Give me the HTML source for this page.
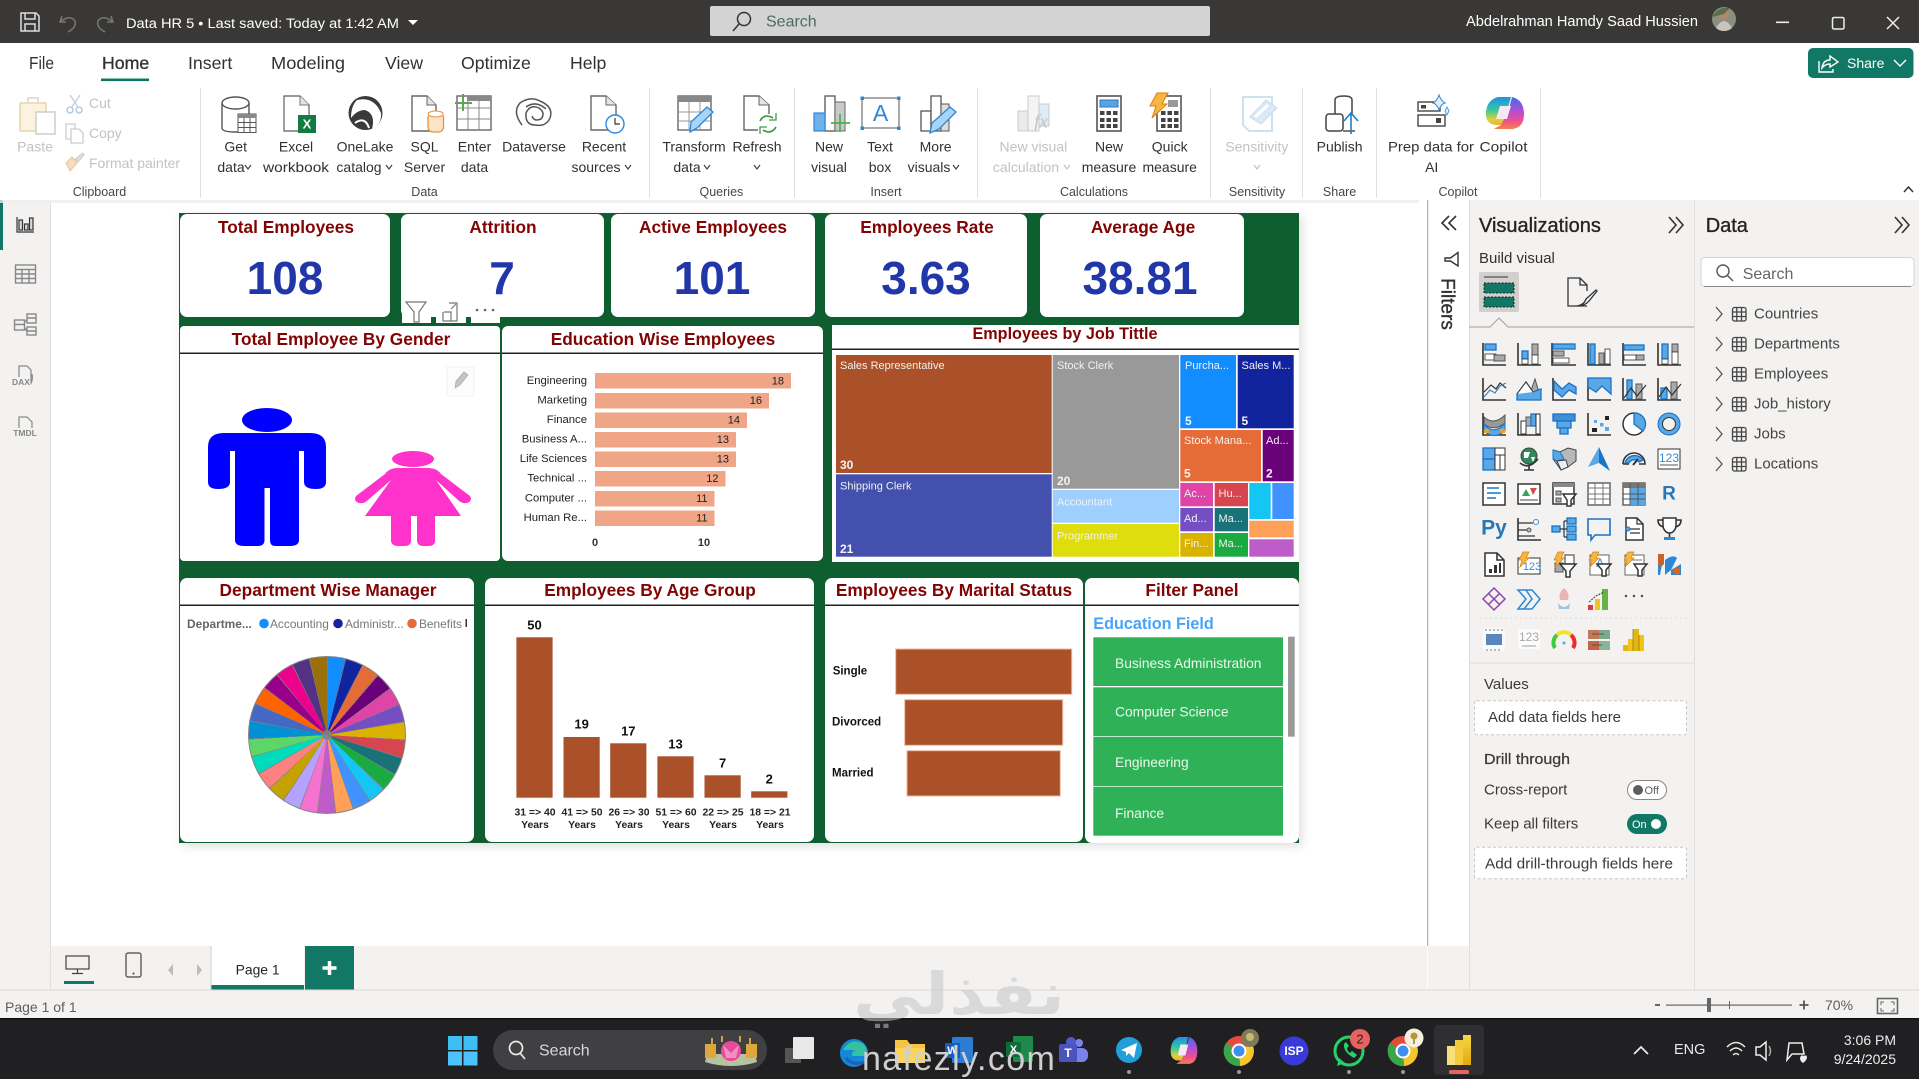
<!DOCTYPE html>
<html><head><meta charset="utf-8"><title>Power BI</title>
<style>
html,body{margin:0;padding:0;width:1919px;height:1079px;overflow:hidden;background:#fff}
svg{position:absolute;left:0;top:0;display:block}
text{font-family:"Liberation Sans","DejaVu Sans",sans-serif;dominant-baseline:central}
.m{text-anchor:middle}.e{text-anchor:end}
.tab{font-size:17.7px;fill:#323130}
.r{font-size:14px;fill:#323130;text-anchor:middle}
.rd{font-size:14px;fill:#c4c2c0;text-anchor:middle}
.gl{font-size:12.5px;fill:#484644;text-anchor:middle}
.h{font-size:17.3px;font-weight:bold;fill:#800404;text-anchor:middle}
.v{font-size:46px;font-weight:bold;fill:#2136a8;text-anchor:middle}
.el{font-size:11.3px;fill:#222;text-anchor:end}
.ev{font-size:11px;fill:#222;text-anchor:end}
.tm{font-size:11px;fill:#f1f1f1}
.tv{font-size:12px;font-weight:bold;fill:#f4f4f4}
.ag{font-size:13px;font-weight:bold;fill:#111;text-anchor:middle}
.ax{font-size:10.4px;font-weight:bold;fill:#222;text-anchor:middle}
.fl{font-size:13.8px;fill:#e9f7ec}
.p{font-size:15px;fill:#3b3a39}
.tr{font-size:15px;fill:#444}
.s{fill:none;stroke:#333;stroke-width:1.6}
.b{fill:#5aa7e6;stroke:#1a73c4;stroke-width:1.3}
.g{fill:#aaa;stroke:#555;stroke-width:1}
.w{fill:#fff;stroke:#333;stroke-width:1.5}
.d{fill:#333}
#pie{position:absolute;left:248px;top:656px;width:158px;height:158px;border-radius:50%;box-sizing:border-box;border:1px solid #888;background:conic-gradient(#118dff 0 13.33deg,#12239e 0 26.67deg,#e66c37 0 40deg,#6b007b 0 53.33deg,#e044a7 0 66.67deg,#744ec2 0 80deg,#d9b300 0 93.33deg,#d64550 0 106.67deg,#197278 0 120deg,#1aab40 0 133.33deg,#15c6f4 0 146.67deg,#4092ff 0 160deg,#ffa058 0 173.33deg,#be5dc9 0 186.67deg,#f472d0 0 200deg,#b5a1ff 0 213.33deg,#c4a200 0 226.67deg,#ff8080 0 240deg,#00dbbc 0 253.33deg,#5bd667 0 266.67deg,#0091d5 0 280deg,#4668c5 0 293.33deg,#ff6300 0 306.67deg,#99008a 0 320deg,#ec008c 0 333.33deg,#533285 0 346.67deg,#99700a 0 360deg)}
#pie2{position:absolute;left:248px;top:656px;width:158px;height:158px;border-radius:50%;background:radial-gradient(circle,rgba(130,130,130,.85) 0 4px,transparent 6px),repeating-conic-gradient(rgba(130,130,130,.85) 0 .8deg,transparent .8deg 13.333deg)}
</style></head><body>
<svg width="1919" height="1079" viewBox="0 0 1919 1079" xmlns="http://www.w3.org/2000/svg">
<defs>
<linearGradient id="cl" x1="0" y1="0" x2="0" y2="1"><stop offset="0" stop-color="#1f8fe8"/><stop offset=".45" stop-color="#35c6a0"/><stop offset=".8" stop-color="#d7d23a"/><stop offset="1" stop-color="#f8b030"/></linearGradient>
<linearGradient id="cr" x1="0" y1="0" x2="0" y2="1"><stop offset="0" stop-color="#3f6fe8"/><stop offset=".4" stop-color="#a94fd8"/><stop offset=".75" stop-color="#ef4f8f"/><stop offset="1" stop-color="#f77f4a"/></linearGradient>
<linearGradient id="pb" x1="0" y1="0" x2="0" y2="1"><stop offset="0" stop-color="#f7d64a"/><stop offset="1" stop-color="#e0a80e"/></linearGradient>
<g id="cop"><path d="M1498 97H1511L1503 125H1496Q1485 124 1486 112Q1487 100 1498 97Z" fill="url(#cl)"/><path d="M1512 97Q1524 100 1524 114Q1524 127 1513 129H1494L1501 125L1508 112L1512 97Z" fill="url(#cr)"/><path d="M1500 106H1511L1507 119H1496Z" fill="#f5e9f5"/></g>
</defs>
<!-- backgrounds -->
<rect width="1919" height="1079" fill="#fff"/>
<rect x="0" y="200" width="50" height="790" fill="#f3f2f1"/>
<rect x="50" y="200" width="1" height="790" fill="#e1dfdd"/>
<rect x="0" y="200" width="3" height="50" fill="#117865"/>
<rect x="1469" y="200" width="450" height="790" fill="#f3f2f1"/>
<rect x="1469" y="200" width="1" height="790" fill="#e1dfdd"/>
<rect x="1694" y="200" width="1" height="790" fill="#e1dfdd"/>
<rect x="1427" y="200" width="1.2" height="746" fill="#b0b0b0"/>
<!-- title bar -->
<rect width="1919" height="43" fill="#393836"/>
<g fill="none" stroke="#ddd" stroke-width="1.5"><path d="M21 13H36L39 16V31H21Z"/><path d="M25 13V19H35V13M25 31V24H35V31"/></g>
<g fill="none" stroke="#777" stroke-width="1.5"><path d="M62 16L60 22L66 22M60 22Q70 14 75 21Q77 27 68 32"/><path d="M111 16L113 22L107 22M113 22Q103 14 98 21Q96 27 105 32"/></g>
<text x="126" y="24" font-size="14.2px" fill="#fff" textLength="273" lengthAdjust="spacingAndGlyphs">Data HR 5 • Last saved: Today at 1:42 AM</text>
<path d="M408 20H418L413 25Z" fill="#fff"/>
<rect x="710" y="6" width="500" height="30" rx="2" fill="#d3d3d3"/>
<g fill="none" stroke="#333" stroke-width="1.5"><circle cx="744" cy="19" r="6.5"/><path d="M739 24L733 31"/></g>
<text x="766" y="22" font-size="16px" fill="#4d6b60">Search</text>
<text x="1466" y="22" font-size="14.4px" fill="#fff" textLength="232" lengthAdjust="spacingAndGlyphs">Abdelrahman Hamdy Saad Hussien</text>
<circle cx="1724" cy="19" r="12" fill="#8a8f80"/><path d="M1716 28Q1724 14 1732 28A12 12 0 0 1 1716 28Z" fill="#c9c4bc"/><circle cx="1724" cy="14" r="5" fill="#b7846b"/><path d="M1712 17Q1718 6 1730 8L1724 14Z" fill="#5b6b4c"/>
<rect x="1776" y="21.5" width="13" height="1.6" fill="#eee"/>
<rect x="1832.5" y="17.5" width="11.5" height="11.5" rx="1.5" fill="none" stroke="#eee" stroke-width="1.5"/>
<path d="M1887 17L1899 29M1899 17L1887 29" stroke="#eee" stroke-width="1.5"/>
<!-- ribbon -->
<rect x="0" y="43" width="1919" height="157" fill="#fff"/>
<rect x="0" y="200" width="1419" height="3" fill="#eee" opacity=".8"/>
<text class="tab" x="29" y="63" textLength="25" lengthAdjust="spacingAndGlyphs">File</text>
<text class="tab" x="102" y="63" style="stroke:#323130;stroke-width:.35">Home</text>
<text class="tab" x="188" y="63">Insert</text>
<text class="tab" x="271" y="63" textLength="74" lengthAdjust="spacingAndGlyphs">Modeling</text>
<text class="tab" x="385" y="63">View</text>
<text class="tab" x="461" y="63">Optimize</text>
<text class="tab" x="570" y="63">Help</text>
<rect x="101" y="78.5" width="48" height="2.6" fill="#117865"/>
<rect x="1808" y="48" width="105.500" height="30" rx="5" fill="#117865"/>
<g fill="none" stroke="#fff" stroke-width="1.4"><path d="M1819 61V72H1833V69"/><path d="M1822 68Q1823 60 1830 60V56L1838 62L1830 67V64Q1825 64 1822 68Z"/><path d="M1894 60L1900 66L1906 60"/></g>
<text x="1847" y="63" font-size="14px" fill="#fff">Share</text>
<g fill="#e1dfdd"><rect x="200" y="88" width="1" height="110"/><rect x="649" y="88" width="1" height="110"/><rect x="794" y="88" width="1" height="110"/><rect x="977" y="88" width="1" height="110"/><rect x="1210" y="88" width="1" height="110"/><rect x="1302" y="88" width="1" height="110"/><rect x="1376" y="88" width="1" height="110"/><rect x="1540" y="88" width="1" height="110"/></g>
<!-- ribbon labels -->
<text class="rd" x="35" y="146.500">Paste</text>
<text x="89" y="103" font-size="14px" fill="#c4c2c0">Cut</text>
<text x="89" y="133" font-size="14px" fill="#c4c2c0">Copy</text>
<text x="89" y="163" font-size="14px" fill="#c4c2c0">Format painter</text>
<text class="gl" x="99.500" y="192">Clipboard</text>
<text class="r" x="235.700" y="146.500">Get</text><text class="r" x="231" y="167">data</text><path d="M245 165L248 169L251 165" fill="none" stroke="#444" stroke-width="1.2"/>
<text class="r" x="296" y="146.500">Excel</text><text class="r" x="296" y="167" textLength="66" lengthAdjust="spacingAndGlyphs">workbook</text>
<text class="r" x="365" y="146.500">OneLake</text><text class="r" x="359" y="167">catalog</text><path d="M386 165L389 169L392 165" fill="none" stroke="#444" stroke-width="1.2"/>
<text class="r" x="424.500" y="146.500">SQL</text><text class="r" x="424.500" y="167">Server</text>
<text class="r" x="474.500" y="146.500">Enter</text><text class="r" x="474.500" y="167">data</text>
<text class="r" x="534" y="146.500">Dataverse</text>
<text class="r" x="604" y="146.500">Recent</text><text class="r" x="596" y="167">sources</text><path d="M625 165L628 169L631 165" fill="none" stroke="#444" stroke-width="1.2"/>
<text class="gl" x="424.500" y="192">Data</text>
<text class="r" x="694" y="146.500">Transform</text><text class="r" x="687" y="167">data</text><path d="M704 165L707 169L710 165" fill="none" stroke="#444" stroke-width="1.2"/>
<text class="r" x="757" y="146.500">Refresh</text><path d="M754 165L757 169L760 165" fill="none" stroke="#444" stroke-width="1.2"/>
<text class="gl" x="721.400" y="192">Queries</text>
<text class="r" x="829" y="146.500">New</text><text class="r" x="829" y="167">visual</text>
<text class="r" x="880" y="146.500">Text</text><text class="r" x="880" y="167">box</text>
<text class="r" x="935.600" y="146.500">More</text><text class="r" x="929" y="167">visuals</text><path d="M953 165L956 169L959 165" fill="none" stroke="#444" stroke-width="1.2"/>
<text class="gl" x="886" y="192">Insert</text>
<text class="rd" x="1033.400" y="146.500">New visual</text><text class="rd" x="1026" y="167">calculation</text><path d="M1064 165L1067 169L1070 165" fill="none" stroke="#c4c2c0" stroke-width="1.2"/>
<text class="r" x="1109" y="146.500">New</text><text class="r" x="1109" y="167">measure</text>
<text class="r" x="1169.700" y="146.500">Quick</text><text class="r" x="1169.700" y="167">measure</text>
<text class="gl" x="1094" y="192">Calculations</text>
<text class="rd" x="1256.800" y="146.500">Sensitivity</text><path d="M1254 165L1257 169L1260 165" fill="none" stroke="#c4c2c0" stroke-width="1.2"/>
<text class="gl" x="1257" y="192">Sensitivity</text>
<text class="r" x="1339.600" y="146.500">Publish</text>
<text class="gl" x="1339.600" y="192">Share</text>
<text class="r" x="1431" y="146.500" textLength="86" lengthAdjust="spacingAndGlyphs">Prep data for</text><text class="r" x="1431.700" y="167">AI</text>
<text class="r" x="1503.500" y="146.500" textLength="48" lengthAdjust="spacingAndGlyphs">Copilot</text>
<text class="gl" x="1458" y="192">Copilot</text>
<path d="M1904 192L1908.500 187L1913 192" fill="none" stroke="#333" stroke-width="1.5"/>
<!-- ribbon icons -->
<g><rect x="20" y="103" width="26" height="28" rx="1" fill="#fbf3df" stroke="#e7d4aa" stroke-width="1.5"/><path d="M28 103V98H38V103" fill="none" stroke="#d8d6d4" stroke-width="1.5"/><rect x="36" y="112" width="19" height="22" fill="#fff" stroke="#cfcdcb" stroke-width="1.5"/></g>
<g fill="none" stroke="#c3ccd6" stroke-width="1.3"><path d="M70 95L78 107M80 95L72 107"/><circle cx="70" cy="110" r="3" stroke="#a9c6e0"/><circle cx="79" cy="110" r="3" stroke="#a9c6e0"/></g>
<g fill="#fff" stroke="#cfcdcb" stroke-width="1.3"><path d="M66 124H75V139H66Z"/><path d="M71 129H79L83 133V143H71Z"/></g>
<g><path d="M66 163L72 157L77 163L70 171Z" fill="#f6dcbd" stroke="#e5c79a"/><path d="M75 159L83 153L84 155L78 162Z" fill="#ddd" stroke="#ccc"/></g>
<!-- get data -->
<g fill="#fff" stroke="#555" stroke-width="1.4"><path d="M222 103V128Q222 132 235.500 132Q249 132 249 128V103"/><ellipse cx="235.500" cy="103" rx="13.500" ry="6"/></g>
<rect x="238" y="114" width="18" height="18.500" fill="#fff" stroke="#555"/><rect x="238" y="114" width="18" height="4" fill="#888"/><path d="M244 118V132M250 118V132M238 122.500H256M238 127.500H256" stroke="#555"/>
<!-- excel -->
<path d="M284 96H300L309 105V131H284Z" fill="#fff" stroke="#777" stroke-width="1.4"/><path d="M300 96V105H309" fill="#e4e4e4" stroke="#777"/>
<rect x="298" y="115" width="18" height="18" fill="#107c41"/><text x="307" y="124" font-size="13px" font-weight="bold" fill="#fff" class="m">X</text>
<!-- onelake -->
<circle cx="365.500" cy="113" r="17" fill="#3b3a39"/><path d="M357 100Q374 96 381 113Q382 124 372 129Q376 114 365 110Q357 110 351 118Q351 106 357 100Z" fill="#fff"/><path d="M355 123Q365 116 369 128" fill="none" stroke="#fff" stroke-width="2"/>
<!-- sql -->
<path d="M412 96H427L436 105V131H412Z" fill="#fff" stroke="#666" stroke-width="1.4"/><path d="M427 96V105H436" fill="#e4e4e4" stroke="#666"/>
<rect x="428" y="113" width="15.500" height="19" rx="5" fill="#fbe3c7" stroke="#e8943a" stroke-width="1.3"/><ellipse cx="435.700" cy="114" rx="7.500" ry="3" fill="#fff" stroke="#e8943a"/>
<!-- enter data -->
<rect x="457" y="96" width="34" height="34" fill="#fff" stroke="#666" stroke-width="1.4"/><rect x="467" y="96" width="24" height="5" fill="#888"/><path d="M468 101V130M479 101V130M457 108H491M457 119H491" stroke="#888"/><path d="M463 94V111M455 103H472" stroke="#5fa35b" stroke-width="2"/>
<!-- dataverse -->
<g fill="none" stroke="#555" stroke-width="1.5"><path d="M522 125Q512 112 520 103Q530 96 540 101Q554 107 550 118Q546 127 535 125Q525 125 526 113Q530 104 539 108Q546 113 541 119Q534 122 532 116"/><path d="M526 107Q536 100 546 109"/></g>
<!-- recent -->
<path d="M591 96H606L616 105V130H591Z" fill="#fff" stroke="#666" stroke-width="1.4"/><path d="M606 96V105H616" fill="#e4e4e4" stroke="#666"/><circle cx="615" cy="124" r="9" fill="#fff" stroke="#2b88d8" stroke-width="1.4"/><path d="M615 118V124H620" fill="none" stroke="#333" stroke-width="1.2"/>
<!-- transform -->
<rect x="678" y="96" width="33" height="34" fill="#fff" stroke="#666" stroke-width="1.4"/><rect x="678" y="96" width="33" height="6" fill="#888"/><path d="M689 102V130M700 102V130M678 112H711M678 121H711" stroke="#999"/><path d="M690 132L691 122L707 107L713 112L697 128Z" fill="#a8d4f5" stroke="#2b88d8" stroke-width="1.3"/>
<!-- refresh -->
<path d="M744 96H759L769 105V130H744Z" fill="#fff" stroke="#666" stroke-width="1.4"/><path d="M759 96V105H769" fill="#e4e4e4" stroke="#666"/><rect x="758" y="114" width="20" height="19" fill="#fff"/><path d="M760 121Q764 113 773 118M776 127Q771 135 763 130" fill="none" stroke="#3f9a4a" stroke-width="1.7"/><path d="M776 113V120H769M760 134V127H767" fill="none" stroke="#3f9a4a" stroke-width="1.3"/>
<!-- new visual -->
<rect x="825" y="96" width="10" height="35" fill="#fff" stroke="#555" stroke-width="1.3"/><rect x="814" y="113" width="11" height="18" fill="#6db2ea" stroke="#2b88d8" stroke-width="1.2"/><rect x="835" y="102" width="10" height="29" fill="#c9c9c9" stroke="#666" stroke-width="1"/><path d="M840 114V132M831 123H850" stroke="#4caf50" stroke-width="1.7"/>
<!-- text box -->
<rect x="862" y="98" width="37" height="30" fill="#fff" stroke="#555" stroke-width="1"/><g fill="#2b88d8"><rect x="860.500" y="96.500" width="3.500" height="3.500"/><rect x="897" y="96.500" width="3.500" height="3.500"/><rect x="860.500" y="126.500" width="3.500" height="3.500"/><rect x="897" y="126.500" width="3.500" height="3.500"/></g><text x="880.500" y="113" font-size="23px" fill="#2b88d8" class="m">A</text>
<!-- more visuals -->
<rect x="921" y="111" width="10" height="20" fill="#fff" stroke="#555" stroke-width="1.3"/><rect x="931" y="96" width="10" height="35" fill="#fff" stroke="#555" stroke-width="1.3"/><rect x="941" y="104" width="8" height="27" fill="#ddd" stroke="#555"/><path d="M930 133L932 123L950 107L956 112L939 129Z" fill="#a8d4f5" stroke="#2b88d8" stroke-width="1.3"/>
<!-- calc -->
<rect x="1018" y="111" width="10" height="20" fill="#eaeaea" stroke="#ccc"/><rect x="1028" y="96" width="11" height="35" fill="#f4f4f4" stroke="#ccc"/><rect x="1039" y="104" width="10" height="22" fill="#dcecf8" stroke="#ccc"/><text x="1041" y="122" font-size="19px" font-style="italic" fill="#c4c2c0" class="m" style="font-family:'Liberation Serif',serif">fx</text>
<rect x="1097" y="96" width="24" height="35" fill="#fff" stroke="#555" stroke-width="1.6"/><rect x="1100" y="100" width="18" height="7" fill="#5ba3e0" stroke="#2b78c0"/><g fill="#444"><rect x="1100" y="111" width="4.500" height="4"/><rect x="1106.500" y="111" width="4.500" height="4"/><rect x="1113" y="111" width="4.500" height="4"/><rect x="1100" y="118" width="4.500" height="4"/><rect x="1106.500" y="118" width="4.500" height="4"/><rect x="1113" y="118" width="4.500" height="4"/><rect x="1100" y="124" width="4.500" height="4"/><rect x="1106.500" y="124" width="4.500" height="4"/><rect x="1113" y="124" width="4.500" height="4"/></g>
<rect x="1157" y="96" width="24" height="35" fill="#fff" stroke="#555" stroke-width="1.6"/><rect x="1168" y="100" width="10" height="7" fill="#999"/><g fill="#444"><rect x="1161" y="111" width="4.500" height="4"/><rect x="1167.500" y="111" width="4.500" height="4"/><rect x="1174" y="111" width="4.500" height="4"/><rect x="1161" y="118" width="4.500" height="4"/><rect x="1167.500" y="118" width="4.500" height="4"/><rect x="1174" y="118" width="4.500" height="4"/><rect x="1161" y="124" width="4.500" height="4"/><rect x="1167.500" y="124" width="4.500" height="4"/><rect x="1174" y="124" width="4.500" height="4"/></g><path d="M1157 93H1168L1162 104H1167L1152 118L1156 106H1150Z" fill="#f6b642" stroke="#d97f12"/>
<!-- sensitivity -->
<path d="M1243 97H1272V131H1249L1243 125Z" fill="#fff" stroke="#cde2f1" stroke-width="2"/><path d="M1250 117L1266 100L1277 108L1261 124Z" fill="#d9e9f5" stroke="#c6dcec"/><path d="M1255 117L1268 105" stroke="#fff" stroke-width="3"/>
<!-- publish -->
<path d="M1335 115V100Q1335 96 1344 96Q1352 96 1352 100V114" fill="#fff" stroke="#444" stroke-width="1.5"/><rect x="1326" y="114" width="17" height="17" rx="3" fill="#fff" stroke="#444" stroke-width="1.5"/><path d="M1343 131H1355" stroke="#444" stroke-width="1.4"/><path d="M1351 134V114M1344 121L1351 113L1358 121" fill="none" stroke="#1f7dc4" stroke-width="1.6"/>
<!-- prep -->
<rect x="1418" y="102" width="22" height="9" fill="#fff" stroke="#444" stroke-width="1.4"/><rect x="1421" y="105" width="5" height="3.500" fill="#444"/><rect x="1418" y="115" width="27" height="11" fill="#fff" stroke="#444" stroke-width="1.4"/><rect x="1436" y="118" width="5" height="5" fill="#444"/><path d="M1439 95Q1441 101 1445 103Q1441 104 1439 110Q1437 104 1433 103Q1437 101 1439 95Z" fill="#dff0fb" stroke="#2b88d8"/><path d="M1447 107L1449 111L1447 115L1445 111Z" fill="#dff0fb" stroke="#2b88d8" stroke-width=".8"/>
<!-- copilot -->
<use href="#cop"/>
<!-- left rail icons -->
<g fill="none" stroke="#333" stroke-width="1.2"><path d="M17 217V232H34"/><rect x="19" y="220" width="3.500" height="10" fill="#d9d9d9"/><rect x="24.500" y="224" width="3.500" height="6" fill="#d9d9d9"/><rect x="29.500" y="218" width="3.500" height="12" fill="#d9d9d9"/></g>
<g fill="none" stroke="#888" stroke-width="1.4"><rect x="15.500" y="265" width="20" height="18"/><path d="M15.500 269.500H35.500M15.500 274H35.500M15.500 278.500H35.500M22 269V283M29 269V283"/></g>
<g fill="none" stroke="#888" stroke-width="1.4"><rect x="14.500" y="320" width="10" height="10"/><rect x="27" y="314" width="9" height="9"/><rect x="27" y="327" width="9" height="8"/><path d="M14.500 324.500H24.500M27 318H36M27 331H36M24.500 322L27 320M24.500 328L27 331"/></g>
<path d="M19 377V366H27L31 370V383Q33 380 32 374" fill="none" stroke="#888" stroke-width="1.2"/><text x="21" y="382" font-size="8.500px" font-weight="bold" fill="#888" class="m">DAX</text>
<path d="M19 428V417H27L32 422V428" fill="none" stroke="#888" stroke-width="1.2"/><text x="25" y="433" font-size="8.500px" font-weight="bold" fill="#888" class="m">TMDL</text>
<!-- report canvas -->
<rect x="179" y="213" width="1120" height="630" fill="#0f5e30" style="filter:drop-shadow(3px 3px 5px rgba(0,0,0,.13))"/>
<g fill="#fff">
<rect x="180" y="214" width="210" height="103" rx="7"/><rect x="401" y="214" width="203" height="103" rx="7"/><rect x="611" y="214" width="204" height="103" rx="7"/><rect x="825" y="214" width="202" height="103" rx="7"/><rect x="1040" y="214" width="204" height="103" rx="7"/>
<rect x="402" y="300" width="29" height="23"/><rect x="436" y="300" width="30" height="23"/><rect x="471" y="300" width="29" height="23"/>
<rect x="180" y="326" width="320" height="235" rx="4"/><rect x="502" y="326" width="321" height="235" rx="6"/><rect x="832" y="325" width="467" height="237"/>
<rect x="180" y="578" width="294" height="264" rx="7"/><rect x="485" y="578" width="329" height="264" rx="7"/><rect x="825" y="578" width="258" height="264" rx="7"/><rect x="1085" y="578" width="214" height="265" rx="7"/>
</g>
<text class="h" x="286" y="227">Total Employees</text>
<text class="h" x="503" y="227">Attrition</text>
<text class="h" x="713" y="227">Active Employees</text>
<text class="h" x="927" y="227">Employees Rate</text>
<text class="h" x="1143" y="227">Average Age</text>
<text class="v" x="285" y="278">108</text><text class="v" x="502" y="278">7</text><text class="v" x="712" y="278">101</text><text class="v" x="926" y="278">3.63</text><text class="v" x="1140" y="278">38.81</text>
<g fill="none" stroke="#777" stroke-width="1.2"><path d="M406 302H426L419 312V322H414V312Z"/><path d="M443 312V321H457V303H449M444 312H451V321M451 309L456 304M452 303H457V308"/></g>
<g fill="#666"><circle cx="477" cy="310" r="1.300"/><circle cx="485" cy="310" r="1.300"/><circle cx="493" cy="310" r="1.300"/></g>
<text class="h" x="341" y="339">Total Employee By Gender</text>
<text class="h" x="663" y="339">Education Wise Employees</text>
<rect x="180" y="352.500" width="320" height="1.500" fill="#222"/><rect x="502" y="352.500" width="321" height="1.500" fill="#222"/>
<text class="h" x="1065" y="334" style="font-size:16.2px">Employees by Job Tittle</text>
<rect x="832" y="348.500" width="467" height="1.500" fill="#222"/>
<!-- gender -->
<ellipse cx="267" cy="420" rx="25" ry="12" fill="#0000fe"/>
<path d="M208 447Q208 433 224 433H310Q326 433 326 447V482Q326 489 316 489Q304 489 304 482V451H299V540Q299 546 290 546H275Q270 546 270 540V488H264.500V540Q264.500 546 258 546H244Q235 546 235 540V451H230V482Q230 489 218 489Q208 489 208 482Z" fill="#0000fe"/>
<ellipse cx="413" cy="459" rx="21" ry="8" fill="#ff33cc"/>
<path d="M398 468H428Q437 468 441 474L470 496Q473 501 467 503Q462 504 458 500L436 480L461 516H435V540Q435 546 429 546H423Q417 546 417 540V516H411V540Q411 546 405 546H398Q391 546 391 540V516H365L391 480L368 500Q364 504 359 503Q353 501 356 496L385 474Q389 468 398 468Z" fill="#ff33cc"/>
<rect x="447" y="367" width="27" height="29" fill="#fcfcfc" stroke="#f2f2f2"/><path d="M455 388L456 381L464 372L468 375L460 385Z" fill="#c4c4c4" stroke="#aaa" stroke-width=".7"/>
<!-- education -->
<g fill="#efa586"><rect x="595" y="373" width="196" height="15.500"/><rect x="595" y="393" width="174" height="15.500"/><rect x="595" y="412.500" width="152" height="15.500"/><rect x="595" y="432" width="141" height="15.500"/><rect x="595" y="451.500" width="141" height="15.500"/><rect x="595" y="471" width="130.500" height="15.500"/><rect x="595" y="491" width="119.500" height="15.500"/><rect x="595" y="510.500" width="119.500" height="15.500"/></g>
<text class="el" x="587" y="381">Engineering</text><text class="el" x="587" y="400.500">Marketing</text><text class="el" x="587" y="420">Finance</text><text class="el" x="587" y="439.500">Business A...</text><text class="el" x="587" y="459">Life Sciences</text><text class="el" x="587" y="478.500">Technical ...</text><text class="el" x="587" y="498.500">Computer ...</text><text class="el" x="587" y="518">Human Re...</text>
<text class="ev" x="784" y="381.500">18</text><text class="ev" x="762" y="401">16</text><text class="ev" x="740" y="420.500">14</text><text class="ev" x="729" y="440">13</text><text class="ev" x="729" y="459.500">13</text><text class="ev" x="718.500" y="479">12</text><text class="ev" x="707.500" y="499">11</text><text class="ev" x="707.500" y="518.500">11</text>
<text x="595" y="543" font-size="11px" font-weight="bold" fill="#333" class="m">0</text><text x="704" y="543" font-size="11px" font-weight="bold" fill="#333" class="m">10</text>
<!-- treemap -->
<g stroke="none">
<rect x="836" y="355" width="215.700" height="118" fill="#aa5129"/><rect x="836" y="474.300" width="215.700" height="82.400" fill="#4350ae"/>
<rect x="1052.700" y="355" width="126.300" height="133.700" fill="#999"/><rect x="1052.700" y="490" width="126.300" height="32.700" fill="#9ecfff"/><rect x="1052.700" y="524" width="126.300" height="32.700" fill="#dfdd0d"/>
<rect x="1180.300" y="355" width="55.700" height="73.300" fill="#118dff"/><rect x="1237.700" y="355" width="56" height="73.300" fill="#12239e"/>
<rect x="1180.300" y="430" width="80.700" height="51.300" fill="#e66c37"/><rect x="1262.700" y="430" width="31" height="51.300" fill="#6b007b"/>
<rect x="1180.300" y="483" width="32.700" height="23.300" fill="#e044a7"/><rect x="1214.700" y="483" width="33.300" height="23.300" fill="#d64550"/>
<rect x="1180.300" y="508" width="32.700" height="23.300" fill="#744ec2"/><rect x="1214.700" y="508" width="33.300" height="23.300" fill="#197278"/>
<rect x="1180.300" y="533" width="32.700" height="23.700" fill="#d9b300"/><rect x="1214.700" y="533" width="33.300" height="23.700" fill="#1aab40"/>
<rect x="1249.300" y="483" width="21.400" height="36" fill="#15c6f4"/><rect x="1272.300" y="483" width="21.400" height="36" fill="#4092ff"/>
<rect x="1249.300" y="520.700" width="44.400" height="16.600" fill="#ffa058"/><rect x="1249.300" y="539.300" width="44.400" height="17.400" fill="#be5dc9"/>
</g>
<text class="tm" x="840" y="366">Sales Representative</text><text class="tv" x="840" y="465">30</text>
<text class="tm" x="840" y="486.500">Shipping Clerk</text><text class="tv" x="840" y="549">21</text>
<text class="tm" x="1057" y="366">Stock Clerk</text><text class="tv" x="1057" y="481">20</text>
<text class="tm" x="1057" y="502.500">Accountant</text><text class="tm" x="1057" y="536.500">Programmer</text>
<text class="tm" x="1185" y="366">Purcha...</text><text class="tv" x="1185" y="421">5</text>
<text class="tm" x="1241.500" y="366">Sales M...</text><text class="tv" x="1241.500" y="421">5</text>
<text class="tm" x="1184" y="441">Stock Mana...</text><text class="tv" x="1184" y="473.500">5</text>
<text class="tm" x="1266" y="441">Ad...</text><text class="tv" x="1266" y="473.500">2</text>
<text class="tm" x="1184" y="494">Ac...</text><text class="tm" x="1218.500" y="494">Hu...</text>
<text class="tm" x="1184" y="519">Ad...</text><text class="tm" x="1218.500" y="519">Ma...</text>
<text class="tm" x="1184" y="544">Fin...</text><text class="tm" x="1218.500" y="544">Ma...</text>
<!-- row 3 -->
<text class="h" x="328" y="590">Department Wise Manager</text>
<text class="h" x="650" y="590">Employees By Age Group</text>
<text class="h" x="954" y="590">Employees By Marital Status</text>
<text class="h" x="1192" y="590">Filter Panel</text>
<rect x="180" y="604.500" width="294" height="1.500" fill="#222"/><rect x="485" y="604.500" width="329" height="1.500" fill="#222"/><rect x="825" y="604.500" width="258" height="1.500" fill="#222"/><rect x="1085" y="604.500" width="214" height="1.500" fill="#222"/>
<rect x="1083.500" y="578" width="1.500" height="265" fill="#0f5e30"/>
<text x="187" y="624" font-size="11.900px" font-weight="bold" fill="#666">Departme...</text>
<circle cx="264" cy="623.500" r="4.800" fill="#118dff"/><text x="270" y="624" font-size="11.900px" fill="#777">Accounting</text>
<circle cx="338" cy="623.500" r="4.800" fill="#12239e"/><text x="345" y="624" font-size="11.900px" fill="#777">Administr...</text>
<circle cx="412" cy="623.500" r="4.800" fill="#e66c37"/><text x="419" y="624" font-size="11.900px" fill="#777">Benefits</text>
<rect x="465.500" y="619" width="1.500" height="8" fill="#333"/>
<!-- age bars -->
<g fill="#aa5129"><rect x="516.400" y="637.300" width="36.200" height="160.400"/><rect x="563.500" y="737" width="36.200" height="60.700"/><rect x="610.200" y="743.300" width="36.200" height="54.400"/><rect x="657.400" y="756.300" width="36.200" height="41.400"/><rect x="704.500" y="775.300" width="36.200" height="22.400"/><rect x="751.200" y="791.300" width="36.200" height="6.400"/></g>
<text class="ag" x="534.500" y="625">50</text><text class="ag" x="581.600" y="724">19</text><text class="ag" x="628.300" y="731">17</text><text class="ag" x="675.500" y="744">13</text><text class="ag" x="722.600" y="763">7</text><text class="ag" x="769.300" y="779">2</text>
<text class="ax" x="535" y="813">31 =&gt; 40</text><text class="ax" x="535" y="825.500">Years</text>
<text class="ax" x="582" y="813">41 =&gt; 50</text><text class="ax" x="582" y="825.500">Years</text>
<text class="ax" x="629" y="813">26 =&gt; 30</text><text class="ax" x="629" y="825.500">Years</text>
<text class="ax" x="676" y="813">51 =&gt; 60</text><text class="ax" x="676" y="825.500">Years</text>
<text class="ax" x="723" y="813">22 =&gt; 25</text><text class="ax" x="723" y="825.500">Years</text>
<text class="ax" x="770" y="813">18 =&gt; 21</text><text class="ax" x="770" y="825.500">Years</text>
<!-- marital -->
<g fill="#aa5129" stroke="#efb79e" stroke-width="1"><rect x="895.700" y="649" width="176" height="45.300"/><rect x="904.700" y="699.700" width="158" height="45.600"/><rect x="907" y="750.700" width="153.300" height="45.300"/></g>
<g font-size="11.500px" font-weight="bold" fill="#111"><text x="832.700" y="671.700">Single</text><text x="832" y="722.700">Divorced</text><text x="832" y="773.300">Married</text></g>
<!-- filter -->
<text x="1093.300" y="624" font-size="16.200px" font-weight="bold" fill="#4aa3f5">Education Field</text>
<g fill="#2fb257"><rect x="1093.300" y="637.300" width="189.700" height="48.700"/><rect x="1093.300" y="687.300" width="189.700" height="49"/><rect x="1093.300" y="737" width="189.700" height="49"/><rect x="1093.300" y="786.700" width="189.700" height="49"/></g>
<text class="fl" x="1115" y="663.300">Business Administration</text><text class="fl" x="1115" y="712">Computer Science</text><text class="fl" x="1115" y="762.300">Engineering</text><text class="fl" x="1115" y="813.300">Finance</text>
<rect x="1288" y="636.700" width="6.700" height="100" fill="#9a9a9a"/>
<!-- page tabs -->
<rect x="51" y="946" width="1376" height="44" fill="#f3f2f1"/><rect x="1428" y="946" width="41" height="44" fill="#f3f2f1"/>
<g fill="none" stroke="#444" stroke-width="1.200"><rect x="66" y="956" width="23" height="13"/><path d="M77.500 969V973M72 973.500H83"/><rect x="126" y="953" width="15" height="24" rx="2"/></g><circle cx="133.500" cy="973.500" r="1" fill="#444"/>
<rect x="64" y="981" width="30" height="3" fill="#117865"/>
<path d="M173 964L168 970L173 976Z" fill="#bbb"/><path d="M197 964L202 970L197 976Z" fill="#bbb"/>
<rect x="211" y="946" width="93" height="44" fill="#fff"/><rect x="211" y="985" width="93" height="5" fill="#117865"/><rect x="210.500" y="946" width="1" height="44" fill="#ccc"/>
<text x="257.600" y="969.500" font-size="14px" fill="#252423" class="m" textLength="44" lengthAdjust="spacingAndGlyphs">Page 1</text>
<rect x="305" y="946" width="49" height="44" fill="#117865"/><path d="M329.500 961V975M322.500 968H336.500" stroke="#fff" stroke-width="3.500"/>
<!-- status -->
<rect x="0" y="990" width="1919" height="29" fill="#f3f2f1"/><rect x="0" y="989.500" width="1919" height="1" fill="#dcdad8"/>
<text x="5" y="1007" font-size="14px" fill="#605e5c">Page 1 of 1</text>
<rect x="1655" y="1004" width="5" height="2" fill="#666"/><rect x="1666" y="1004.500" width="126" height="1.200" fill="#666"/><rect x="1707" y="998" width="4" height="14" fill="#666"/><rect x="1729" y="1001" width="1" height="8" fill="#666"/><path d="M1799.500 1005H1808.500M1804 1000.500V1009.500" stroke="#555" stroke-width="1.800"/>
<text x="1825" y="1005" font-size="14px" fill="#605e5c">70%</text>
<rect x="1877.500" y="998.500" width="20" height="15" fill="none" stroke="#666" stroke-width="1.600"/><path d="M1881 1005V1002H1884M1891 1002H1894V1005M1894 1008V1011H1891M1884 1011H1881V1008" fill="none" stroke="#666"/>
<!-- taskbar -->
<rect x="0" y="1019" width="1919" height="60" fill="#202023"/><rect x="0" y="1018" width="1919" height="1.500" fill="#111"/>
<g fill="#4cc2ff"><rect x="448" y="1036" width="14" height="14" fill="#3fbdf5"/><rect x="463.500" y="1036" width="14" height="14" fill="#3fbdf5"/><rect x="448" y="1051.500" width="14" height="14"/><rect x="463.500" y="1051.500" width="14" height="14"/></g>
<rect x="493" y="1030" width="274" height="40" rx="20" fill="#404043"/>
<g fill="none" stroke="#e8e8e8" stroke-width="1.700"><circle cx="516" cy="1048" r="6.500"/><path d="M520 1053L525 1059"/></g>
<text x="539" y="1051" font-size="16px" fill="#d8d8d8">Search</text>
<g><path d="M705 1062Q731 1070 757 1062L755 1054H707Z" fill="#b9c2a0"/><rect x="705" y="1044" width="11" height="14" fill="#dfa73a"/><rect x="746" y="1044" width="11" height="14" fill="#dfa73a"/><circle cx="731" cy="1051" r="10" fill="#e84b9a"/><path d="M723 1045L731 1053L739 1045L736 1058H726Z" fill="#f48fc6"/><path d="M712 1038V1044M722 1036V1042M740 1036V1042M750 1038V1044" stroke="#c9a64a" stroke-width="2"/></g>
<rect x="785" y="1048" width="16" height="15" fill="#555"/><rect x="793" y="1037" width="21" height="22" rx="1" fill="#e9e9e9"/>
<!-- edge -->
<circle cx="854" cy="1053" r="14" fill="#1388d6"/><path d="M843 1050Q850 1038 862 1043Q870 1049 864 1056H852Q852 1049 858 1050" fill="#35c1a1"/><path d="M846 1058Q852 1066 864 1062" stroke="#1b5fc1" stroke-width="3" fill="none"/>
<path d="M895 1040H907L910 1044H925V1063H895Z" fill="#f6c442"/><rect x="895" y="1048" width="30" height="15" fill="#fad45c"/>
<rect x="952" y="1037" width="21" height="26" rx="1.500" fill="#2b7cd3"/><rect x="945" y="1043" width="15" height="15" fill="#185abd"/><text x="952.500" y="1051" font-size="11px" font-weight="bold" fill="#fff" class="m">W</text>
<rect x="1013" y="1036" width="20" height="26" rx="1.500" fill="#1d8a4c"/><rect x="1006" y="1042" width="15" height="15" fill="#0f6c38"/><text x="1013.500" y="1050" font-size="11px" font-weight="bold" fill="#fff" class="m">X</text>
<circle cx="1079" cy="1043" r="4" fill="#7b83eb"/><rect x="1072" y="1048" width="16" height="14" rx="6" fill="#7b83eb"/><circle cx="1071" cy="1042" r="5" fill="#5059c9"/><rect x="1059" y="1044" width="18" height="18" rx="2" fill="#4b53bc"/><text x="1068" y="1053" font-size="12px" font-weight="bold" fill="#fff" class="m">T</text>
<circle cx="1129" cy="1050" r="13" fill="#229ed9"/><path d="M1121 1050L1137 1043L1134 1058L1129 1053L1126 1056L1126 1052Z" fill="#fff"/>
<use href="#cop" transform="translate(130.500,955.500) scale(.7,.84)"/>
<!-- chrome -->
<circle cx="1239" cy="1051" r="15" fill="#e64a3b"/><path d="M1239 1051L1251.500 1043A15 15 0 0 1 1240 1066Z" fill="#f7c52d"/><path d="M1239 1051L1240 1066A15 15 0 0 1 1226 1043Z" fill="#3ba54a"/><circle cx="1239" cy="1051" r="6.500" fill="#3f8df0" stroke="#fff" stroke-width="2"/>
<circle cx="1250" cy="1038" r="9" fill="#7f7a56"/><circle cx="1250" cy="1037" r="4" fill="#c8b878"/>
<circle cx="1294" cy="1051" r="14.500" fill="#3a3ad8"/><text x="1294" y="1051" font-size="12px" font-weight="bold" fill="#fff" class="m">ISP</text>
<circle cx="1349" cy="1051" r="14" fill="none" stroke="#25d366" stroke-width="3"/><path d="M1337 1066L1339 1058L1345 1063Z" fill="#25d366"/><path d="M1344 1044Q1343 1052 1354 1058L1357 1055L1352 1051L1350 1053Q1347 1051 1347 1048L1349 1046L1346 1042Z" fill="#25d366"/>
<circle cx="1360" cy="1039" r="10" fill="#e8625f"/><text x="1360" y="1039" font-size="13px" fill="#222" class="m">2</text>
<circle cx="1403" cy="1051" r="15" fill="#e64a3b"/><path d="M1403 1051L1415.500 1043A15 15 0 0 1 1404 1066Z" fill="#f7c52d"/><path d="M1403 1051L1404 1066A15 15 0 0 1 1390 1043Z" fill="#3ba54a"/><circle cx="1403" cy="1051" r="6.500" fill="#3f8df0" stroke="#fff" stroke-width="2"/>
<circle cx="1414" cy="1038" r="9.500" fill="#f4f0de"/><circle cx="1414" cy="1036" r="3.500" fill="#b6953e"/><rect x="1413" y="1038" width="2" height="6" fill="#b6953e"/>
<rect x="1434" y="1025" width="50" height="50" rx="4" fill="#2f2f32"/>
<rect x="1447" y="1046" width="8" height="19" fill="#f9e07a"/><rect x="1455" y="1040" width="8" height="25" fill="#f4c93c"/><path d="M1463 1035H1471V1065H1463Z" fill="url(#pb)"/>
<rect x="1449" y="1070" width="20" height="4" rx="1.500" fill="#e8625f"/>
<g fill="#9a9a9a"><circle cx="1129" cy="1072" r="2"/><circle cx="1239" cy="1072" r="2"/><circle cx="1349" cy="1072" r="2"/><circle cx="1403" cy="1072" r="2"/></g>
<path d="M1634 1054L1641 1047L1648 1054" fill="none" stroke="#eee" stroke-width="1.700"/>
<text x="1674" y="1050" font-size="14.500px" fill="#eaeaea">ENG</text>
<g fill="none" stroke="#eee" stroke-width="1.500"><path d="M1727 1047Q1736 1038 1745 1047M1730 1051Q1736 1045 1742 1051M1733 1055Q1736 1052 1739 1055"/><path d="M1756 1047H1760L1766 1042V1060L1760 1055H1756Z"/><path d="M1769 1046Q1772 1051 1769 1056" stroke="#aaa"/><path d="M1789 1043H1802L1804 1054H1792L1787 1060Z"/></g><path d="M1800 1058Q1801 1054 1804 1056Q1807 1054 1807 1058Q1806 1061 1803 1063Q1800 1061 1800 1058Z" fill="#eee"/>
<text x="1896" y="1040" font-size="14px" fill="#eee" class="e">3:06 PM</text><text x="1896" y="1059" font-size="14px" fill="#eee" class="e">9/24/2025</text>
<!-- watermark -->
<text x="959" y="994" font-size="58px" font-weight="bold" fill="#c6c6c6" opacity=".55" class="m" style="font-family:'DejaVu Sans',sans-serif" textLength="212" lengthAdjust="spacingAndGlyphs">نفذلي</text>
<text x="862" y="1059" font-size="34px" fill="#cfcfcf" letter-spacing="1.400">nafezly.com</text>
<!-- filters pane -->
<path d="M1449 216L1442 223L1449 230M1456 216L1449 223L1456 230" fill="none" stroke="#333" stroke-width="1.600"/>
<path d="M1458 252.500V266L1450.500 261H1445V258H1450.500Z" fill="none" stroke="#333" stroke-width="1.400"/>
<text transform="translate(1447,304) rotate(90)" font-size="19px" class="m" fill="#323130" style="stroke:#323130;stroke-width:.4">Filters</text>
<!-- viz pane -->
<text x="1479" y="226" font-size="20px" fill="#252423" style="stroke:#252423;stroke-width:.35">Visualizations</text>
<path d="M1669 217L1676 225L1669 233M1676 217L1683 225L1676 233" fill="none" stroke="#333" stroke-width="1.600"/>
<text x="1705.700" y="226" font-size="20px" fill="#252423" style="stroke:#252423;stroke-width:.35">Data</text>
<path d="M1895 217L1902 225L1895 233M1902 217L1909 225L1902 233" fill="none" stroke="#333" stroke-width="1.600"/>
<text x="1479" y="258.500" font-size="15px" fill="#323130">Build visual</text>
<rect x="1479" y="272" width="40" height="40" rx="2" fill="#d2d0ce"/>
<path d="M1484 277H1508" stroke="#333" stroke-width="1"/><g fill="#117865" stroke="#222" stroke-width="1" stroke-dasharray="2 1.500"><rect x="1484" y="283" width="30" height="10"/><rect x="1484" y="297" width="30" height="10"/></g>
<g fill="none" stroke="#333" stroke-width="1.300"><path d="M1587 306H1568V278H1580L1587 285V291"/><path d="M1580 278V285H1587"/><path d="M1577 306Q1584 305 1586 299L1596 290L1597 291L1589 301Q1585 306 1577 306Z"/></g>
<path d="M1469 327H1490L1499 318L1508 327H1694" fill="none" stroke="#a19f9d" stroke-width="1"/>
<!-- viz icons row1 -->
<g transform="translate(1482,342)"><path class="s" d="M1 1V23H24"/><rect class="b" x="3" y="2" width="11" height="6"/><rect class="w" x="3" y="12" width="11" height="6" style="stroke-width:.8"/><rect class="g" x="12" y="13" width="11" height="6"/></g>
<g transform="translate(1517,342)"><path class="s" d="M1 1V23H24"/><rect class="b" x="5" y="9" width="6" height="8"/><rect class="w" x="5" y="17" width="6" height="5" style="stroke-width:.8"/><rect class="g" x="15" y="2" width="6" height="11"/><rect class="w" x="15" y="13" width="6" height="9" style="stroke-width:.8"/></g>
<g transform="translate(1552,342)"><path class="s" d="M0 1V23H24"/><rect class="b" x="1" y="2" width="22" height="5"/><rect class="g" x="1" y="9" width="11" height="5"/><rect class="w" x="1" y="16" width="16" height="5" style="stroke-width:.8"/></g>
<g transform="translate(1587,342)"><path class="s" d="M1 1V23H24"/><rect class="b" x="3" y="2" width="5" height="20"/><rect class="g" x="12" y="11" width="5" height="11"/><rect class="w" x="18" y="7" width="5" height="15" style="stroke-width:.8"/></g>
<g transform="translate(1622,342)"><path class="s" d="M1 1V23H24"/><rect class="b" x="2" y="3" width="20" height="5"/><rect class="g" x="14" y="13" width="8" height="5"/><rect class="w" x="2" y="13" width="12" height="5" style="stroke-width:.8"/></g>
<g transform="translate(1657,342)"><path class="s" d="M1 1V23H24"/><rect class="b" x="5" y="2" width="6" height="15"/><rect class="w" x="5" y="17" width="6" height="5" style="stroke-width:.8"/><rect class="g" x="15" y="2" width="6" height="8"/><rect class="w" x="15" y="10" width="6" height="12" style="stroke-width:.8"/></g>
<!-- row2 -->
<g transform="translate(1482,377)"><path class="s" d="M1 1V23H24"/><path class="s" d="M2 15L9 8L14 12L18 6L24 11" style="stroke-width:1.2"/><path d="M2 20L8 13L13 16L18 9L24 6" fill="none" stroke="#3b82c4" stroke-width="1.200"/></g>
<g transform="translate(1517,377)"><path class="g" d="M11 22L18 2L24 22Z"/><path class="b" d="M0 22V17L9 5L16 15L24 12V23H0Z"/><path d="M0 17L9 5L16 15" fill="#fff" stroke="#333"/></g>
<g transform="translate(1552,377)"><path class="s" d="M1 1V23H24"/><path class="b" d="M2 4L10 12L17 6L24 10V17L17 13L10 20L2 13Z"/></g>
<g transform="translate(1587,377)"><path class="s" d="M1 1V23H24"/><path class="b" d="M1 1H24V17L15 9L9 15L1 10Z"/></g>
<g transform="translate(1622,377)"><path class="s" d="M1 1V23H24"/><rect class="b" x="5" y="3" width="5" height="19"/><rect class="g" x="14" y="7" width="6" height="15"/><path class="s" d="M2 21L9 11L15 19L24 8" style="stroke-width:1.2"/></g>
<g transform="translate(1657,377)"><path class="s" d="M1 1V23H24"/><rect class="b" x="4" y="11" width="6" height="11"/><rect class="g" x="14" y="5" width="6" height="17"/><path class="s" d="M2 20L9 10L15 18L24 7" style="stroke-width:1.2"/></g>
<!-- row3 -->
<g transform="translate(1482,412)"><path class="s" d="M1 1V23H24"/><path d="M2 5Q12 14 23 3V11Q12 20 2 12Z" fill="#999" stroke="#555"/><path d="M2 12Q12 24 23 11V19Q12 28 2 19Z" fill="#5aa7e6" stroke="#1a73c4"/><rect x="2" y="17" width="5" height="4" fill="#e8a030"/><rect x="18" y="17" width="5" height="4" fill="#e8a030"/></g>
<g transform="translate(1517,412)"><path class="s" d="M1 1V23H24"/><rect x="4" y="9" width="5" height="13" class="w" style="stroke-width:1"/><rect class="g" x="9" y="5" width="5" height="9"/><rect class="b" x="14" y="2" width="5" height="12"/><rect x="19" y="2" width="4" height="20" class="w" style="stroke-width:1"/></g>
<g transform="translate(1552,412)"><rect class="b" x="1" y="2" width="22" height="7" style="fill:#3d8fd6"/><rect class="b" x="5" y="9" width="14" height="7"/><rect class="b" x="8" y="16" width="8" height="6"/></g>
<g transform="translate(1587,412)"><path class="s" d="M1 1V23H24"/><rect x="5" y="16" width="5" height="4" fill="#222"/><rect x="7" y="8" width="3" height="3" fill="#5aa7e6"/><rect x="13" y="11" width="3.500" height="3.500" fill="#5aa7e6"/><rect x="18" y="4" width="4" height="4" fill="#222"/><rect x="18" y="15" width="4" height="4" fill="#5aa7e6"/></g>
<g transform="translate(1622,412)"><circle class="w" cx="12" cy="12" r="11"/><path class="b" d="M12 1A11 11 0 0 1 21 19L12 12Z"/></g>
<g transform="translate(1657,412)"><circle cx="12" cy="12" r="9" fill="none" stroke="#5aa7e6" stroke-width="4.500"/><circle cx="12" cy="12" r="11" fill="none" stroke="#1a73c4" stroke-width="1"/><circle cx="12" cy="12" r="6.500" fill="#f3f2f1" stroke="#333" stroke-width="1"/></g>
<!-- row4 -->
<g transform="translate(1482,447)"><rect class="b" x="1" y="1" width="12" height="11"/><rect class="b" x="1" y="12" width="12" height="11"/><rect class="w" x="13" y="1" width="10" height="7" style="stroke-width:1"/><rect class="w" x="13" y="8" width="5" height="15" style="stroke-width:1"/><rect class="w" x="18" y="8" width="5" height="15" style="stroke-width:1"/></g>
<g transform="translate(1517,447)"><circle cx="12" cy="9" r="8" fill="#2e8b57" stroke="#444"/><path d="M7 5H13L11 11H7ZM14 10H18L16 15Z" fill="#fff"/><path class="s" d="M3 16Q12 23 21 12M12 19V23M7 23H17"/></g>
<g transform="translate(1552,447)"><path d="M1 3L8 5L16 1L24 3V14L16 20L9 23L4 16L1 12Z" fill="#b8b8b8" stroke="#444"/><path d="M1 3L8 5L12 12L5 14L1 12Z" fill="#5aa7e6" stroke="#1a73c4"/><path d="M5 14L14 13L16 20L9 23Z" fill="#e8eef5" stroke="#444"/></g>
<g transform="translate(1587,447)"><path d="M12 0L23 24L12 16Z" fill="#1a73c4"/><path d="M12 0L1 20L12 16Z" fill="#5aa7e6"/></g>
<g transform="translate(1622,447)"><path class="s" d="M1 17A11 11 0 0 1 23 17H17M7 17H1"/><path class="b" d="M3 16A10 10 0 0 1 21 13L17 15A6 6 0 0 0 7 16Z"/><path d="M11 18L16 12" stroke="#333" stroke-width="2"/></g>
<g transform="translate(1657,447)"><rect class="w" x="1" y="2" width="22" height="20" style="stroke-width:1"/><text x="12" y="11" font-size="12px" fill="#3a8ad0" class="m">123</text><path d="M3 18H21" stroke="#555"/></g>
<!-- row5 -->
<g transform="translate(1482,482)"><rect class="w" x="1" y="1" width="22" height="22"/><path d="M5 6H17M5 11H19M5 16H14" stroke="#3a8ad0" stroke-width="1.800"/></g>
<g transform="translate(1517,482)"><rect class="w" x="1" y="2" width="22" height="20"/><path d="M5 14L9 7L13 14Z" fill="#3aa655"/><path d="M13 6L20 6L16 13Z" fill="#d84a4a"/><path d="M3 18H21" stroke="#444"/></g>
<g transform="translate(1552,482)"><rect class="w" x="1" y="1" width="21" height="21"/><rect x="1" y="1" width="21" height="4" fill="#888"/><rect x="4" y="9" width="5" height="4" class="g"/><rect x="4" y="16" width="5" height="4" class="g"/><path class="w" d="M11 12H24L19 18V24H15V18Z"/></g>
<g transform="translate(1587,482)"><rect class="w" x="1" y="1" width="22" height="22" style="stroke:#666"/><path d="M1 6H23M1 12H23M1 17H23M8 1V23M16 1V23" stroke="#777"/></g>
<g transform="translate(1622,482)"><rect class="w" x="1" y="1" width="22" height="22" style="stroke:#666"/><rect x="1" y="1" width="22" height="5" fill="#777"/><rect x="8" y="6" width="15" height="17" fill="#5aa7e6"/><path d="M1 12H23M1 17H23M8 1V23M16 1V23" stroke="#555"/></g>
<text x="1669" y="494" font-size="19px" font-weight="bold" fill="#2777b8" class="m">R</text>
<!-- row6 -->
<text x="1494" y="528" font-size="21px" font-weight="bold" fill="#2777b8" class="m">Py</text>
<g transform="translate(1517,517)"><path class="s" d="M1 1V23H24"/><path class="s" d="M1 6H16M1 13H10M1 19H18" style="stroke-width:1.2"/><circle cx="19" cy="5" r="2.500" fill="#fff" stroke="#3a8ad0"/><circle cx="12" cy="13" r="2" fill="#bbb" stroke="#555"/></g>
<g transform="translate(1552,517)"><rect class="b" x="0" y="9" width="8" height="6"/><rect class="b" x="15" y="1" width="9" height="6"/><rect class="b" x="15" y="9" width="9" height="6"/><rect class="b" x="15" y="17" width="9" height="6"/><path class="s" d="M8 12H15M12 4V20M12 4H15M12 20H15" style="stroke-width:1.2"/></g>
<g transform="translate(1587,517)"><path class="s" d="M1 2H23V18H8L4 23V18H1Z" style="stroke:#1a73c4"/></g>
<g transform="translate(1622,517)"><path class="w" d="M4 1H15L21 7V23H4Z"/><path class="s" d="M15 1V7H21M8 12H18M8 16H18" style="stroke-width:1.2"/><circle cx="6" cy="12" r="2" fill="#5aa7e6" stroke="#1a73c4"/></g>
<g transform="translate(1657,517)"><path class="w" d="M6 1H19V10Q17 16 12.500 16Q8 16 6 10Z"/><path class="s" d="M6 3H1Q1 9 7 10M19 3H24Q24 9 18 10M12.500 16V21"/><rect x="7" y="20" width="11" height="3" fill="#2b88d8"/></g>
<!-- row7 -->
<g transform="translate(1482,552)"><path class="w" d="M3 1H15L22 8V24H3Z"/><path d="M15 1V8H22" class="s"/><rect x="7" y="17" width="3" height="4" class="d"/><rect x="12" y="13" width="3" height="8" class="d"/><rect x="17" y="11" width="2" height="10" class="d"/></g>
<g transform="translate(1517,552)"><rect class="w" x="1" y="6" width="22" height="16" style="stroke-width:1"/><text x="15" y="15" font-size="11px" fill="#3a8ad0" class="m">123</text><path d="M6 0H12L9 6H12L3 15L5 8H2Z" fill="#f6b642" stroke="#d97f12" stroke-width=".7"/></g>
<g transform="translate(1552,552)"><rect class="g" x="3" y="11" width="8" height="9"/><rect class="w" x="13" y="3" width="9" height="9" style="stroke:#777"/><path class="w" d="M8 12H24L18 19V25H14V19Z"/><path d="M6 0H12L9 6H12L3 15L5 8H2Z" fill="#f6b642" stroke="#d97f12" stroke-width=".7"/></g>
<g transform="translate(1587,552)"><rect class="w" x="3" y="3" width="19" height="20" style="stroke:#666;stroke-width:1"/><text x="13" y="11" font-size="12px" fill="#3a8ad0" class="m">A</text><path class="w" d="M10 12H24L19 18V24H15V18Z"/><path d="M6 0H12L9 6H12L3 15L5 8H2Z" fill="#f6b642" stroke="#d97f12" stroke-width=".7"/></g>
<g transform="translate(1622,552)"><rect class="w" x="3" y="3" width="19" height="20" style="stroke:#666;stroke-width:1"/><path d="M10 8H20" stroke="#777"/><path class="w" d="M12 12H25L20 18V24H16V18Z"/><path d="M6 0H12L9 6H12L3 15L5 8H2Z" fill="#f6b642" stroke="#d97f12" stroke-width=".7"/></g>
<g transform="translate(1657,552)"><path d="M1 2H24V23H1Z" fill="#2b88d8"/><path d="M7 2H24V12L14 18V23H3Z" fill="#f3f2f1"/><path d="M8 8Q16 2 20 6L14 18L8 23Z" fill="#2b88d8"/><path d="M1 2H7V12L4 15L1 12Z" fill="#c8642b"/><circle cx="20" cy="19" r="3.500" fill="#d8651f"/></g>
<!-- row8 -->
<g transform="translate(1482,587)" fill="none" stroke="#8e44ad" stroke-width="1.500"><path d="M12 1L23 12L12 23L1 12Z"/><path d="M6.500 6.500L17.500 17.500M17.500 6.500L6.500 17.500"/></g>
<g transform="translate(1517,587)" fill="none" stroke="#2b88d8" stroke-width="1.500"><path d="M1 3H15L23 12L15 22H1L9 12Z"/><path d="M7 22L15 12L9 3"/></g>
<g transform="translate(1552,587)"><path d="M12 1Q18 6 16 13H8Q6 6 12 1Z" fill="#e9b5b5"/><path d="M6 16Q12 24 18 16L17 22H7Z" fill="#9dc3e6"/></g>
<g transform="translate(1587,587)"><rect x="1" y="18" width="5" height="5" fill="#d83b3b"/><rect x="8" y="12" width="5" height="11" fill="#f3c41f"/><rect x="15" y="2" width="6" height="21" fill="#67b346"/><path d="M2 15L9 9L17 5" stroke="#333" fill="none" stroke-dasharray="2 1"/></g>
<g fill="#444"><circle cx="1626" cy="596" r="1.200"/><circle cx="1634" cy="596" r="1.200"/><circle cx="1642" cy="596" r="1.200"/></g>
<path d="M1480 618H1690" stroke="#ddd" stroke-dasharray="2 3"/>
<!-- row9 -->
<g transform="translate(1482,628)"><rect x="1" y="0" width="22" height="23" rx="3" fill="#fbfbfb"/><rect x="4" y="6" width="16" height="11" fill="#5b86bd"/><path d="M3 2H21M4 22H20" stroke="#777" stroke-dasharray="2 2"/></g>
<g transform="translate(1517,628)"><rect x="1" y="1" width="22" height="20" fill="#fbfbfb"/><text x="12" y="9" font-size="12px" fill="#aaa" class="m">123</text><path d="M5 18H19" stroke="#ccc" stroke-width="2"/></g>
<g transform="translate(1552,628)"><path d="M3 20A10 10 0 0 1 5 7" fill="none" stroke="#3ecb3e" stroke-width="4"/><path d="M5 7A10 10 0 0 1 19 7" fill="none" stroke="#f6e12a" stroke-width="4"/><path d="M19 7A10 10 0 0 1 21 20" fill="none" stroke="#ea2c2c" stroke-width="4"/><circle cx="12" cy="15" r="1.500" fill="#5aa7e6"/></g>
<g transform="translate(1587,628)"><rect x="1" y="2" width="11" height="9" fill="#c07a5a"/><rect x="12" y="2" width="11" height="9" fill="#7da98a"/><rect x="1" y="13" width="11" height="9" fill="#c2664a"/><rect x="12" y="13" width="11" height="9" fill="#8ab49a"/><path d="M5 6H17M5 17H15" stroke="#555"/></g>
<g transform="translate(1622,628)"><rect x="1" y="17" width="5" height="6" fill="#e4b70f"/><rect x="6" y="11" width="5" height="12" fill="#f0c419"/><rect x="11" y="1" width="6" height="22" fill="#e4b70f"/><rect x="17" y="7" width="5" height="16" fill="#f0c419"/><path d="M11 1V23M17 7V23" stroke="#9a7d0a" stroke-width=".8"/></g>
<rect x="1469" y="662.500" width="225" height="1" fill="#dedcda"/>
<text x="1484" y="684.500" class="p">Values</text>
<rect x="1474.500" y="700.700" width="212" height="34" rx="2" fill="#fff" stroke="#c8c6c4" stroke-dasharray="3 2.500"/>
<text x="1488" y="717.700" class="p" textLength="133" lengthAdjust="spacingAndGlyphs">Add data fields here</text>
<text x="1484" y="759.500" class="p" textLength="86" lengthAdjust="spacingAndGlyphs" style="stroke:#3b3a39;stroke-width:.25">Drill through</text>
<text x="1484" y="790" class="p">Cross-report</text>
<text x="1484" y="824" class="p">Keep all filters</text>
<rect x="1627.500" y="780.500" width="39" height="19" rx="9.500" fill="#fff" stroke="#8a8886"/><circle cx="1638" cy="790" r="5" fill="#605e5c"/><text x="1644.500" y="791" font-size="11px" fill="#605e5c">Off</text>
<rect x="1627" y="814" width="40" height="20" rx="10" fill="#117865"/><text x="1632" y="825" font-size="11px" fill="#fff">On</text><circle cx="1656" cy="824" r="5" fill="#fff"/>
<rect x="1474.500" y="847.300" width="212" height="31.400" rx="2" fill="#fff" stroke="#c8c6c4" stroke-dasharray="3 2.500"/>
<text x="1485" y="864" class="p" textLength="188" lengthAdjust="spacingAndGlyphs">Add drill-through fields here</text>
<!-- data pane -->
<rect x="1701" y="257.500" width="213" height="29" rx="4" fill="#fff" stroke="#d6d4d2"/><path d="M1704 286.500H1911" stroke="#8a8886"/>
<g fill="none" stroke="#555" stroke-width="1.400"><circle cx="1723" cy="271" r="6"/><path d="M1727.500 275.500L1733 281"/></g>
<text x="1742.700" y="274.500" font-size="16px" fill="#666">Search</text>
<g fill="none" stroke="#555" stroke-width="1.300"><path d="M1716 307L1722 314L1716 321"/><path d="M1716 337L1722 344L1716 351"/><path d="M1716 367L1722 374L1716 381"/><path d="M1716 397L1722 404L1716 411"/><path d="M1716 427L1722 434L1716 441"/><path d="M1716 457L1722 464L1716 471"/></g>
<g fill="none" stroke="#444" stroke-width="1.300"><g transform="translate(1732,307)"><rect x=".5" y=".5" width="13.500" height="13.500" rx="2"/><path d="M0 5H14M0 9.500H14M4.800 0V14M9.500 0V14"/></g><g transform="translate(1732,337)"><rect x=".5" y=".5" width="13.500" height="13.500" rx="2"/><path d="M0 5H14M0 9.500H14M4.800 0V14M9.500 0V14"/></g><g transform="translate(1732,367)"><rect x=".5" y=".5" width="13.500" height="13.500" rx="2"/><path d="M0 5H14M0 9.500H14M4.800 0V14M9.500 0V14"/></g><g transform="translate(1732,397)"><rect x=".5" y=".5" width="13.500" height="13.500" rx="2"/><path d="M0 5H14M0 9.500H14M4.800 0V14M9.500 0V14"/></g><g transform="translate(1732,427)"><rect x=".5" y=".5" width="13.500" height="13.500" rx="2"/><path d="M0 5H14M0 9.500H14M4.800 0V14M9.500 0V14"/></g><g transform="translate(1732,457)"><rect x=".5" y=".5" width="13.500" height="13.500" rx="2"/><path d="M0 5H14M0 9.500H14M4.800 0V14M9.500 0V14"/></g></g>
<text class="tr" x="1754" y="314">Countries</text><text class="tr" x="1754" y="344">Departments</text><text class="tr" x="1754" y="374">Employees</text><text class="tr" x="1754" y="404">Job_history</text><text class="tr" x="1754" y="434">Jobs</text><text class="tr" x="1754" y="464">Locations</text>
</svg>
<div id="pie"></div><div id="pie2"></div>
</body></html>
